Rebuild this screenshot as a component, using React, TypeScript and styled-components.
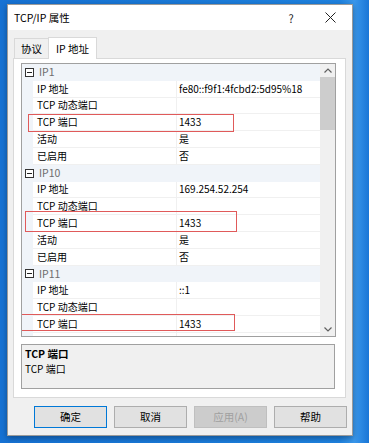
import React from "react";
import styled, { createGlobalStyle } from "styled-components";

const Global = createGlobalStyle`
  html, body { margin: 0; padding: 0; }
  body {
    width: 369px; height: 443px; overflow: hidden;
    background: linear-gradient(90deg, #1672d4 0%, #1a7ad9 50%, #1e82e0 92%, #3a98ec 96%, #1a76d6 100%);
    font-family: "Noto Sans CJK SC", "Noto Sans", sans-serif;
    font-size: 10px;
    color: #000;
  }
`;

const Window = styled.div`
  margin: 4px 0 0 7px;
  width: 346px;
  height: 432px;
  box-sizing: border-box;
  border: 1px solid #9a9a9a;
  background: #f0f0f0;
  display: flex;
  flex-direction: column;
  box-shadow: 0 2px 6px rgba(0,0,0,0.35);
`;

const TitleBar = styled.div`
  height: 25px;
  background: #fff;
  display: flex;
  align-items: center;
  padding-left: 6px;
  flex: none;
`;

const Title = styled.div`
  flex: 1;
  font-size: 10.5px;
  line-height: 14px;
`;

const TitleButton = styled.div<{ $w: number }>`
  width: ${(p) => p.$w}px;
  height: 25px;
  display: flex;
  align-items: center;
  justify-content: center;
  color: #222;
  font-size: 11px;
`;

const Body = styled.div`
  flex: 1;
  display: flex;
  flex-direction: column;
  padding: 6px 7px 0 5px;
`;

const Tabs = styled.div`
  display: flex;
  align-items: flex-end;
  height: 22px;
  padding-left: 1px;
  position: relative;
  z-index: 1;
`;

const Tab = styled.div<{ $active?: boolean }>`
  box-sizing: border-box;
  height: ${(p) => (p.$active ? 22 : 20)}px;
  padding: 0 ${(p) => (p.$active ? 7 : 6)}px;
  border: 1px solid #d9d9d9;
  border-bottom: none;
  margin-left: ${(p) => (p.$active ? -1 : 0)}px;
  background: ${(p) => (p.$active ? "#fff" : "#f0f0f0")};
  display: flex;
  align-items: center;
  font-size: 10.5px;
  line-height: 14px;
  margin-bottom: ${(p) => (p.$active ? -1 : 0)}px;
`;

const Panel = styled.div`
  box-sizing: border-box;
  height: 340px;
  width: 333px;
  background: #fff;
  border: 1px solid #d9d9d9;
  padding: 4px 9px 0 7px;
  display: flex;
  flex-direction: column;
`;

const GridFrame = styled.div`
  position: relative;
  box-sizing: border-box;
  width: 315px;
  height: 274px;
  border: 1px solid #a0a0a0;
  display: flex;
  overflow: hidden;
`;

const Rows = styled.div`
  flex: 1;
  display: flex;
  flex-direction: column;
  background: #f0f4f9;
`;

const CategoryRow = styled.div`
  height: 16.8px;
  flex: none;
  display: flex;
  align-items: center;
  background: #f0f4f9;
  color: #6d6d6d;
  font-size: 10.5px;
  line-height: 14px;
`;

const Toggle = styled.div`
  width: 7px;
  height: 7px;
  margin: 0 5px 0 3px;
  border: 1px solid #333;
  position: relative;
  background: #fff;
  &::after {
    content: "";
    position: absolute;
    left: 1px;
    right: 1px;
    top: 3px;
    height: 1px;
    background: #222;
  }
`;

const PropRow = styled.div`
  height: 16.8px;
  flex: none;
  display: flex;
  box-sizing: border-box;
  line-height: 14px;
`;

const Gutter = styled.div`
  width: 11px;
  flex: none;
  background: #f0f4f9;
`;

const NameCell = styled.div`
  width: 144px;
  flex: none;
  box-sizing: border-box;
  padding-left: 4px;
  display: flex;
  align-items: center;
  background: #fff;
  border-bottom: 1px solid #f0f0f0;
  border-right: 1px solid #f0f0f0;
  white-space: nowrap;
`;

const ValueCell = styled.div`
  flex: 1;
  box-sizing: border-box;
  padding-left: 2px;
  display: flex;
  align-items: center;
  background: #fff;
  border-bottom: 1px solid #f0f0f0;
  white-space: nowrap;
`;

const ScrollBar = styled.div`
  width: 15px;
  flex: none;
  background: #f0f0f0;
  display: flex;
  flex-direction: column;
  align-items: center;
`;

const Arrow = styled.div`
  height: 13px;
  width: 15px;
  display: flex;
  align-items: center;
  justify-content: center;
  flex: none;
`;

const Thumb = styled.div`
  width: 15px;
  height: 53px;
  background: #cdcdcd;
  flex: none;
`;

const Spacer = styled.div`
  flex: 1;
`;

const Highlight = styled.div`
  position: absolute;
  border: 1px solid #e05a5a;
  box-sizing: border-box;
  pointer-events: none;
`;

const Description = styled.div`
  box-sizing: border-box;
  margin-top: 7px;
  width: 314px;
  height: 45px;
  background: #f0f0f0;
  border: 1px solid #a0a0a0;
  padding: 2px 3px;
  display: flex;
  flex-direction: column;
  gap: 1px;
`;

const DescTitle = styled.div`
  font-weight: bold;
  font-size: 10.5px;
  line-height: 14px;
`;

const DescText = styled.div`
  line-height: 14px;
`;

const ButtonRow = styled.div`
  display: flex;
  justify-content: flex-end;
  gap: 7px;
  margin-top: 8px;
  margin-right: -2px;
`;

const Button = styled.div<{ $focus?: boolean; $disabled?: boolean }>`
  box-sizing: border-box;
  width: 73px;
  height: 22px;
  display: flex;
  align-items: center;
  justify-content: center;
  background: ${(p) => (p.$disabled ? "#cccccc" : "#e1e1e1")};
  color: ${(p) => (p.$disabled ? "#a0a0a0" : "#000")};
  border: 1px solid ${(p) => (p.$focus ? "#0078d7" : p.$disabled ? "#bfbfbf" : "#adadad")};
  font-size: 10.5px;
  line-height: 14px;
`;

type Item = { name: string; value: string };

const groups: { title: string; items: Item[] }[] = [
  {
    title: "IP1",
    items: [
      { name: "IP 地址", value: "fe80::f9f1:4fcbd2:5d95%18" },
      { name: "TCP 动态端口", value: "" },
      { name: "TCP 端口", value: "1433" },
      { name: "活动", value: "是" },
      { name: "已启用", value: "否" },
    ],
  },
  {
    title: "IP10",
    items: [
      { name: "IP 地址", value: "169.254.52.254" },
      { name: "TCP 动态端口", value: "" },
      { name: "TCP 端口", value: "1433" },
      { name: "活动", value: "是" },
      { name: "已启用", value: "否" },
    ],
  },
  {
    title: "IP11",
    items: [
      { name: "IP 地址", value: "::1" },
      { name: "TCP 动态端口", value: "" },
      { name: "TCP 端口", value: "1433" },
      { name: "活动", value: "是" },
      { name: "已启用", value: "否" },
    ],
  },
];

const boxes = [
  { left: 6, top: 50, width: 206, height: 18 },
  { left: 3, top: 147, width: 212, height: 21 },
  { left: -1, top: 250, width: 214, height: 17 },
];

export default function App() {
  return (
    <>
      <Global />
      <Window>
        <TitleBar>
          <Title>TCP/IP 属性</Title>
          <TitleButton $w={34}>?</TitleButton>
          <TitleButton $w={44}>
            <svg width="11" height="11" viewBox="0 0 11 11">
              <path d="M0.5 0.5L10.5 10.5M10.5 0.5L0.5 10.5" stroke="#222" strokeWidth="1" />
            </svg>
          </TitleButton>
        </TitleBar>
        <Body>
          <Tabs>
            <Tab>协议</Tab>
            <Tab $active>IP 地址</Tab>
          </Tabs>
          <Panel>
            <GridFrame>
              <Rows>
                {groups.map((g) => (
                  <React.Fragment key={g.title}>
                    <CategoryRow>
                      <Toggle />
                      {g.title}
                    </CategoryRow>
                    {g.items.map((it, i) => (
                      <PropRow key={i}>
                        <Gutter />
                        <NameCell>{it.name}</NameCell>
                        <ValueCell>{it.value}</ValueCell>
                      </PropRow>
                    ))}
                  </React.Fragment>
                ))}
              </Rows>
              <ScrollBar>
                <Arrow>
                  <svg width="8" height="5" viewBox="0 0 8 5">
                    <path d="M0.5 4.5L4 1L7.5 4.5" fill="none" stroke="#606060" strokeWidth="1.2" />
                  </svg>
                </Arrow>
                <Thumb />
                <Spacer />
                <Arrow>
                  <svg width="8" height="5" viewBox="0 0 8 5">
                    <path d="M0.5 0.5L4 4L7.5 0.5" fill="none" stroke="#606060" strokeWidth="1.2" />
                  </svg>
                </Arrow>
              </ScrollBar>
              {boxes.map((b, i) => (
                <Highlight key={i} style={{ left: b.left, top: b.top, width: b.width, height: b.height }} />
              ))}
            </GridFrame>
            <Description>
              <DescTitle>TCP 端口</DescTitle>
              <DescText>TCP 端口</DescText>
            </Description>
          </Panel>
          <ButtonRow>
            <Button $focus>确定</Button>
            <Button>取消</Button>
            <Button $disabled>应用(A)</Button>
            <Button>帮助</Button>
          </ButtonRow>
        </Body>
      </Window>
    </>
  );
}
